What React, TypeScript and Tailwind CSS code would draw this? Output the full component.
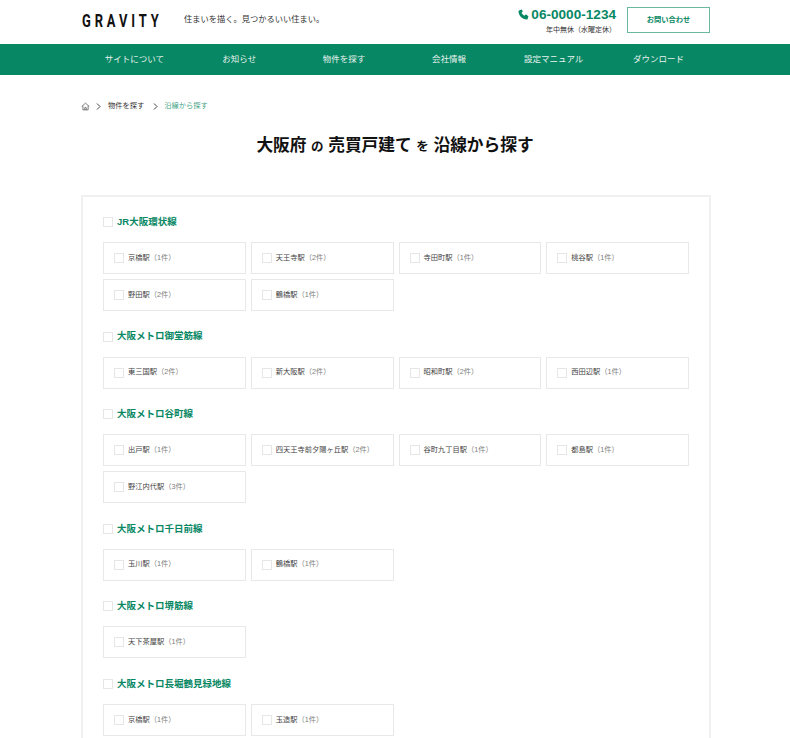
const FONT = "font-['Liberation_Sans','Noto_Sans_CJK_JP',sans-serif]";

const lines: { name: string; stations: [string, number][] }[] = [
  { name: "JR大阪環状線", stations: [["京橋駅", 1], ["天王寺駅", 2], ["寺田町駅", 1], ["桃谷駅", 1], ["野田駅", 2], ["鶴橋駅", 1]] },
  { name: "大阪メトロ御堂筋線", stations: [["東三国駅", 2], ["新大阪駅", 2], ["昭和町駅", 2], ["西田辺駅", 1]] },
  { name: "大阪メトロ谷町線", stations: [["出戸駅", 1], ["四天王寺前夕陽ヶ丘駅", 2], ["谷町九丁目駅", 1], ["都島駅", 1], ["野江内代駅", 3]] },
  { name: "大阪メトロ千日前線", stations: [["玉川駅", 1], ["鶴橋駅", 1]] },
  { name: "大阪メトロ堺筋線", stations: [["天下茶屋駅", 1]] },
  { name: "大阪メトロ長堀鶴見緑地線", stations: [["京橋駅", 1], ["玉造駅", 1]] },
];

const nav = ["サイトについて", "お知らせ", "物件を探す", "会社情報", "設定マニュアル", "ダウンロード"];

function Box() {
  return <span className="block w-[10px] h-[10px] border border-[#e6e6e6] bg-white shrink-0" />;
}

function Chevron() {
  return (
    <svg width="5" height="7" viewBox="0 0 5 7" fill="none" stroke="#444" strokeWidth="1">
      <path d="M1 .5 4 3.5 1 6.5" />
    </svg>
  );
}

export default function App() {
  return (
    <div className={`${FONT} h-[738px] w-full overflow-hidden bg-white text-[#333]`}>
      <header className="h-[44px] flex pl-[82px] pr-[80px]">
        <div className="flex items-center h-[40px]">
          <span className="text-[19px] leading-none tracking-[0.3em] font-bold text-[#111] w-[102px] font-['Roboto',sans-serif] scale-x-[0.68] origin-left whitespace-nowrap">GRAVITY</span>
          <span className="text-[8.25px] text-[#333] mt-[1px]">住まいを描く。見つかるいい住まい。</span>
        </div>
        <div className="ml-auto flex items-start pt-[7px]">
          <div className="flex flex-col items-end mr-[11px]">
            <div className="flex items-center gap-[2px] text-[#078764] font-bold text-[13.6px] leading-[15px]">
              <svg width="11" height="11" viewBox="0 0 24 24" fill="#078764">
                <path d="M6.6 1.5 2.4 3.2C1.6 3.6 1 4.3 1.1 5.2c.6 9.5 8.2 17.1 17.700 17.700.9.1 1.600-.5 2-1.300l1.700-4.200c.3-.7.1-1.500-.5-2l-3.800-3.100c-.6-.5-1.400-.5-2 0l-2.300 2.300c-2.800-1.400-4.900-3.500-6.300-6.300l2.300-2.300c.5-.6.5-1.400 0-2L8.600 2c-.5-.6-1.300-.8-2-.5Z" />
              </svg>
              <span>06-0000-1234</span>
            </div>
            <span className="text-[7px] leading-[10px] mt-[3px] text-[#333]">年中無休（水曜定休）</span>
          </div>
          <a className="w-[83px] h-[26px] flex items-center justify-center border border-[#078764]/60 text-[#078764] text-[7.25px] font-semibold">お問い合わせ</a>
        </div>
      </header>

      <nav className="h-[31px] bg-[#078764] flex items-center pl-[82px] pr-[79px] text-[#e8f3ef] text-[8.5px]">
        {nav.map((n) => (
          <span key={n} className="flex-1 text-center whitespace-nowrap">{n}</span>
        ))}
      </nav>

      <div className="flex items-center mt-[26px] ml-[81px] h-[10px] text-[7.25px] text-[#333]">
        <svg width="9" height="9" viewBox="0 0 24 24" fill="none" stroke="#555" strokeWidth="2">
          <path d="M2 12 12 3l10 9M5 10v11h14V10M10 21v-6h4v6" />
        </svg>
        <span className="ml-[6px] mr-[7px]"><Chevron /></span>
        <span>物件を探す</span>
        <span className="ml-[9px] mr-[6px]"><Chevron /></span>
        <span className="text-[#078764]/80">沿線から探す</span>
      </div>

      <h1 className="mt-[23px] text-center text-[16.7px] leading-[24px] font-bold text-[#111]">
        大阪府 <span className="text-[12.5px]">の</span> 売買戸建て <span className="text-[12.5px]">を</span> 沿線から探す
      </h1>

      <main className="mt-[36px] ml-[81px] mr-[79px] border-2 border-[#f0f0f0] pt-[16px] px-[20px] pb-[20px]">
        {lines.map((l) => (
          <section key={l.name} className="mb-[16.6px]">
            <div className="flex items-center gap-[4px] h-[18px] mb-[11px]">
              <Box />
              <span className="text-[9.5px] font-bold text-[#078764]">{l.name}</span>
            </div>
            <div className="grid grid-cols-4 gap-[5px]">
              {l.stations.map(([s, c]) => (
                <div key={s} className="h-[32px] border border-[#e8e8e8] flex items-center pl-[10px] text-[7.25px] whitespace-nowrap">
                  <Box />
                  <span className="ml-[4px] text-[#444]">{s}</span>
                  <span className="text-[#808080]">（{c}件）</span>
                </div>
              ))}
            </div>
          </section>
        ))}
      </main>
    </div>
  );
}
